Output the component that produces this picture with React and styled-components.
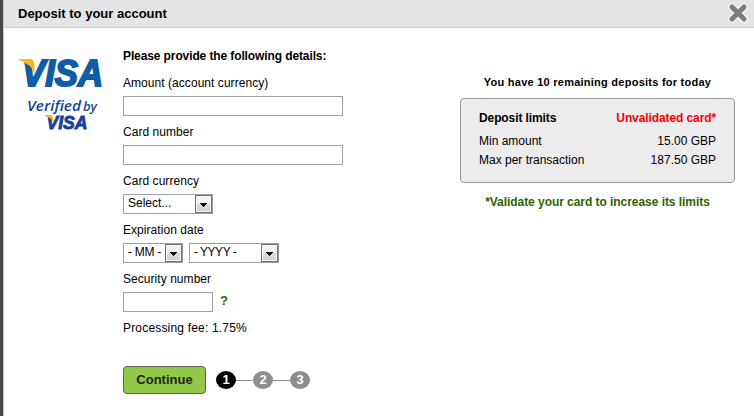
import React from "react";
import styled, { createGlobalStyle } from "styled-components";

const GlobalStyle = createGlobalStyle`
  * {
    box-sizing: border-box;
  }
  body {
    margin: 0;
    background: #fff;
    color: #000;
    font: 12px/16px "Liberation Sans", Arial, sans-serif;
  }
`;

const Window = styled.div`
  display: flex;
  flex-direction: column;
  width: 754px;
  height: 416px;
  overflow: hidden;
  border-left: 3px solid #484848;
  background: #fff;
`;

const Header = styled.div`
  display: flex;
  justify-content: space-between;
  align-items: flex-start;
  height: 28px;
  padding: 3px 6px 0 14px;
  border-left: 1px solid #c9c9c9;
  border-bottom: 1px solid #cfcfcf;
  background: #e4e4e4;
`;

const Title = styled.div`
  font-size: 13px;
  font-weight: bold;
  line-height: 22px;
`;

const CloseIcon = styled.svg`
  display: block;
  width: 20px;
  height: 20px;
`;

const Body = styled.div`
  display: flex;
  flex: 1;
  border-left: 1px solid #c9c9c9;
`;

const LogoColumn = styled.div`
  width: 119px;
  padding: 24px 0 0 10px;
`;

const FormColumn = styled.div`
  width: 337px;
  padding-top: 20px;
`;

const Heading = styled.div`
  height: 27px;
  font-weight: bold;
  letter-spacing: -0.11px;
`;

const Field = styled.div`
  height: 49px;
`;

const Label = styled.div`
  height: 21px;
  letter-spacing: 0.05px;
`;

const Fee = styled.div`
  letter-spacing: 0.18px;
`;

const Controls = styled.div`
  display: flex;
  gap: 6px;
`;

const Input = styled.input`
  display: block;
  width: ${({ $width }) => $width}px;
  height: 20px;
  padding: 0 4px;
  border: 1px solid #a0a0a0;
  border-radius: 0;
  background: #fff;
  outline: none;
`;

const SelectBox = styled.div`
  display: flex;
  justify-content: space-between;
  width: ${({ $width }) => $width}px;
  height: 20px;
  padding-left: 4px;
  border: 1px solid #a0a0a0;
  letter-spacing: ${({ $spacing }) => $spacing}px;
  line-height: 17px;
  white-space: nowrap;
`;

const SelectArrow = styled.div`
  display: flex;
  align-items: center;
  justify-content: center;
  width: 17px;
  height: 18px;
  padding-top: 2px;
  border: 1px solid #707070;
  background: linear-gradient(#f3f3f3 0 50%, #dedede 50%, #d0d0d0);
  box-shadow: inset 0 0 0 1px #f8f8f8;
`;

const Help = styled.span`
  padding-left: 1px;
  color: #2d6b00;
  font-size: 13px;
  font-weight: bold;
  line-height: 18px;
`;

const Actions = styled.div`
  display: flex;
  align-items: center;
  margin-top: 30px;
`;

const Button = styled.button`
  width: 83px;
  height: 28px;
  margin-right: 10px;
  padding: 0 0 1px;
  border: 1px solid #5c6650;
  border-radius: 4px;
  background: #92c848;
  color: #222;
  font: bold 13px "Liberation Sans", Arial, sans-serif;
`;

const Step = styled.div`
  width: 20px;
  height: 18px;
  border-radius: 50%;
  background: ${({ $active }) => ($active ? "#000" : "#8e8c8c")};
  color: #fff;
  font-size: 13px;
  font-weight: bold;
  line-height: 18px;
  text-align: center;
`;

const StepLine = styled.div`
  width: 17px;
  height: 1px;
  margin-top: 1px;
  background: #8e8c8c;
`;

const LimitsColumn = styled.div`
  width: 275px;
  padding-top: 46px;
`;

const Remaining = styled.div`
  font-size: 11px;
  font-weight: bold;
  letter-spacing: 0.25px;
  text-align: center;
`;

const LimitsBox = styled.div`
  height: 85px;
  margin: 8px 0 11px;
  padding: 11px 18px 0;
  border: 1px solid #999;
  border-radius: 4px;
  background: #ececec;
`;

const LimitRow = styled.div`
  display: flex;
  justify-content: space-between;
  height: ${({ $head }) => ($head ? 23 : 19)}px;
  font-weight: ${({ $head }) => ($head ? "bold" : "normal")};
  letter-spacing: ${({ $head }) => ($head ? "-0.1px" : "normal")};
`;

const Warning = styled.span`
  color: #f00;
`;

const Validate = styled.div`
  color: #2d6500;
  font-weight: bold;
  letter-spacing: -0.05px;
  text-align: center;
`;

const Logo = () => (
  <svg width='92' height='82' viewBox='14 52 92 82' display='block'>
    <text
      x='22'
      y='86'
      fill='#105ca5'
      stroke='#105ca5'
      strokeWidth='2'
      fontFamily='"Liberation Sans", Arial, sans-serif'
      fontStyle='italic'
      fontWeight='bold'
      fontSize='37'
      textLength='81'
      lengthAdjust='spacingAndGlyphs'>
      VISA
    </text>
    <path d='M19 59h11q3.500 0 4 4l1 11q-4-10-16-14z' fill='#fbb61c' />
    <g fill='#16439a' fontFamily='"Open Sans", sans-serif' fontStyle='italic'>
      <text
        x='27'
        y='111'
        fontSize='15'
        fontWeight='600'
        textLength='54'
        lengthAdjust='spacingAndGlyphs'>
        Verified
      </text>
      <text
        x='83'
        y='111'
        fontSize='13'
        fontWeight='600'
        textLength='14'
        lengthAdjust='spacingAndGlyphs'>
        by
      </text>
    </g>
    <text
      x='46.5'
      y='128.5'
      fill='#16439a'
      stroke='#16439a'
      strokeWidth='0.9'
      fontFamily='"Liberation Sans", Arial, sans-serif'
      fontStyle='italic'
      fontWeight='bold'
      fontSize='18.5'
      textLength='41'
      lengthAdjust='spacingAndGlyphs'>
      VISA
    </text>
    <path d='M45 115h5q2.500 0 3 3l1 5q-2-5-9-7z' fill='#fbb61c' />
  </svg>
);

const Select = ({ width, spacing = 0, children }) => (
  <SelectBox $width={width} $spacing={spacing}>
    {children}
    <SelectArrow>
      <svg width='7' height='4' shapeRendering='crispEdges'>
        <path d='M0 0h7L3.5 4z' />
      </svg>
    </SelectArrow>
  </SelectBox>
);

const limits = [
  ["Min amount", "15.00 GBP"],
  ["Max per transaction", "187.50 GBP"],
];

export default function App() {
  return (
    <>
      <GlobalStyle />
      <Window>
        <Header>
          <Title>Deposit to your account</Title>
          <CloseIcon viewBox='0 0 20 20'>
            <path
              d='M4 4l12 12M16 4L4 16'
              stroke='#f4f4f4'
              strokeWidth='7.5'
              strokeLinecap='round'
            />
            <path
              d='M4 4l12 12M16 4L4 16'
              stroke='#7d7d7d'
              strokeWidth='5'
              strokeLinecap='round'
            />
          </CloseIcon>
        </Header>
        <Body>
          <LogoColumn>
            <Logo />
          </LogoColumn>
          <FormColumn>
            <Heading>Please provide the following details:</Heading>
            <Field>
              <Label>Amount (account currency)</Label>
              <Input $width={220} />
            </Field>
            <Field>
              <Label>Card number</Label>
              <Input $width={220} />
            </Field>
            <Field>
              <Label>Card currency</Label>
              <Select width={90}>Select...</Select>
            </Field>
            <Field>
              <Label>Expiration date</Label>
              <Controls>
                <Select width={60} spacing={-0.3}>
                  - MM -
                </Select>
                <Select width={90} spacing={-0.5}>
                  - YYYY -
                </Select>
              </Controls>
            </Field>
            <Field>
              <Label>Security number</Label>
              <Controls>
                <Input $width={90} />
                <Help>?</Help>
              </Controls>
            </Field>
            <Fee>Processing fee: 1.75%</Fee>
            <Actions>
              <Button>Continue</Button>
              <Step $active>1</Step>
              <StepLine />
              <Step>2</Step>
              <StepLine />
              <Step>3</Step>
            </Actions>
          </FormColumn>
          <LimitsColumn>
            <Remaining>You have 10 remaining deposits for today</Remaining>
            <LimitsBox>
              <LimitRow $head>
                <span>Deposit limits</span>
                <Warning>Unvalidated card*</Warning>
              </LimitRow>
              {limits.map(([name, value]) => (
                <LimitRow key={name}>
                  <span>{name}</span>
                  <span>{value}</span>
                </LimitRow>
              ))}
            </LimitsBox>
            <Validate>*Validate your card to increase its limits</Validate>
          </LimitsColumn>
        </Body>
      </Window>
    </>
  );
}
